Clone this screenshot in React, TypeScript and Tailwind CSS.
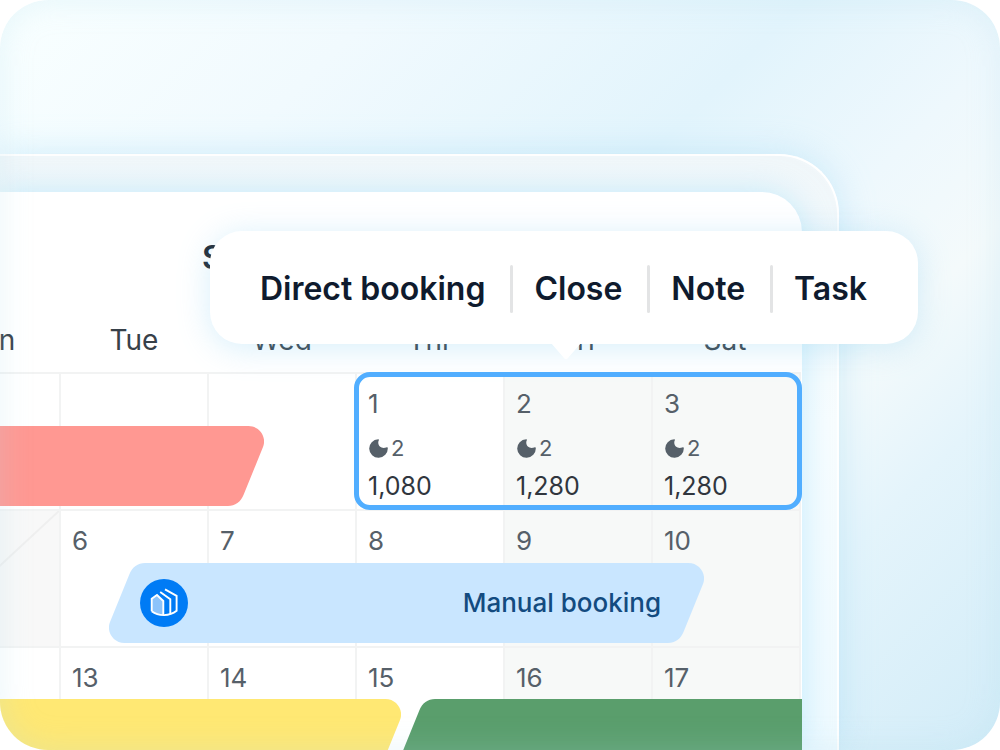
import React from "react";

type Day = { day?: number; nights?: number; price?: string; weekend?: boolean; blocked?: boolean };

const weekdays = ["Mon", "Tue", "Wed", "Thr", "Fri", "Sat"];

const weeks: Day[][] = [
  [
    {},
    {},
    {},
    { day: 1, nights: 2, price: "1,080" },
    { day: 2, nights: 2, price: "1,280", weekend: true },
    { day: 3, nights: 2, price: "1,280", weekend: true },
  ],
  [{ blocked: true }, { day: 6 }, { day: 7 }, { day: 8 }, { day: 9, weekend: true }, { day: 10, weekend: true }],
  [{}, { day: 13 }, { day: 14 }, { day: 15 }, { day: 16, weekend: true }, { day: 17, weekend: true }],
];

const actions = ["Direct booking", "Close", "Note", "Task"];

function Moon() {
  return (
    <svg viewBox="0 0 19 19" className="size-[19px] shrink-0" aria-hidden="true">
      <path
        d="M9.200.2A9.300 9.300 0 1 0 18.800 9.200C18.800 8.100 18 8 17.200 8.400C12.400 10.300 7.800 6.200 9.700 1.600C10.100.7 10.100.2 9.200.2Z"
        fill="#566069"
      />
    </svg>
  );
}

function Cap({ side }: { side: "left" | "right" }) {
  return (
    <svg
      viewBox="0 0 48 80"
      className={side === "left" ? "h-20 w-12 shrink-0 rotate-180" : "h-20 w-12 shrink-0"}
      fill="currentColor"
      aria-hidden="true"
    >
      <path d="M0 0H32.5C43.5 0 51 11 47 21L27.5 69C25 75.600 19 80 12 80H0Z" />
    </svg>
  );
}

function HouseLogo() {
  return (
    <svg viewBox="0 0 48 48" className="size-12 shrink-0" fill="none" aria-hidden="true">
      <circle cx="24" cy="24" r="24" fill="#007bf5" />
      <path d="M11.700 19.800L17.300 16.200L23.300 22V36C19 35.800 15 34.600 11.700 32.300Z" fill="#8cc3fb" />
      <g stroke="#fff" strokeWidth="1.900">
        <path d="M11.700 32.300V19.800L17 16L23.300 22V36" />
        <path d="M20.200 13L30.300 20.300V35" />
        <path d="M25 10.300L36.600 16.800V31.800C29.500 37.500 18.500 37.500 11.700 32.300" />
      </g>
    </svg>
  );
}

function Bar({ week }: { week: number }) {
  if (week === 0) {
    return (
      <div className="absolute left-0 top-[54px] z-10 flex w-[353px] text-[#ff9892]">
        <div className="flex-1 bg-current" />
        <Cap side="right" />
      </div>
    );
  }
  if (week === 1) {
    return (
      <div className="absolute left-[198px] top-[54px] z-10 flex w-[595px] text-[#c9e6ff]">
        <Cap side="left" />
        <div className="flex-1 bg-current" />
        <Cap side="right" />
        <div className="absolute inset-0 flex items-center justify-between pl-[31px] pr-[43px]">
          <HouseLogo />
          <span className="text-[26px] font-medium leading-8 text-[#134b80]">Manual booking</span>
        </div>
      </div>
    );
  }
  return (
    <>
      <div className="absolute left-0 top-[53px] z-10 flex w-[490px] text-[#ffe873]">
        <div className="flex-1 bg-current" />
        <Cap side="right" />
      </div>
      <div className="absolute -right-px left-[488px] top-[53px] z-10 flex text-[#5a9e6c]">
        <Cap side="left" />
        <div className="flex-1 bg-current" />
      </div>
    </>
  );
}

function Calendar() {
  return (
    <div className="flex justify-end pr-px">
      <table className="w-[890px] shrink-0 table-fixed border-separate border-spacing-0">
        <thead>
          <tr>
            {weekdays.map((name) => (
              <th
                key={name}
                scope="col"
                className="h-[52px] w-[148px] pb-3 pl-[2px] text-center text-[28px] font-normal leading-10 text-[#374049] last:w-[150px] last:pr-1"
              >
                {name}
              </th>
            ))}
          </tr>
        </thead>
        <tbody>
          {weeks.map((days, week) => (
            <tr key={week} className="relative">
              {days.map((d, i) => (
                <td
                  key={i}
                  className={
                    "h-[137px] border-l-2 border-t-2 border-[#f2f3f3] p-0 align-top last:border-r-2 " +
                    (d.weekend ? "bg-[#f7f9f8]" : d.blocked ? "bg-[#f8f8f8]" : "bg-white")
                  }
                >
                  {i === 0 && <Bar week={week} />}
                  {d.blocked && (
                    <svg viewBox="0 0 146 135" className="block h-[135px] w-full" aria-hidden="true">
                      <path d="M0 135L146 0" stroke="#efefef" strokeWidth="2" />
                    </svg>
                  )}
                  {d.day && (
                    <div className="pl-[11px] pt-[14px] text-[26px] leading-8 text-[#566069]">
                      {d.day}
                      {d.price && (
                        <>
                          <div className="mt-4 flex items-center gap-[3px] pl-px text-[22px] leading-6">
                            <Moon />
                            {d.nights}
                          </div>
                          <div className="mt-3 text-[25px] leading-7 text-[#30363e]">{d.price}</div>
                        </>
                      )}
                    </div>
                  )}
                  {d.day === 1 && (
                    <div className="absolute -right-px top-0 z-20 h-[138px] w-[448px] rounded-2xl border-[5px] border-[#51aeff]" />
                  )}
                </td>
              ))}
            </tr>
          ))}
        </tbody>
      </table>
    </div>
  );
}

function ActionMenu() {
  return (
    <div
      role="menu"
      className="absolute right-[82px] top-[231px] z-30 flex h-[113px] items-center rounded-[32px] bg-white pl-[50px] pr-[51px] pt-[2px] shadow-[0_4px_32px_rgba(130,205,242,0.32)]"
    >
      {actions.map((label, i) => (
        <React.Fragment key={label}>
          {i > 0 && <span className="ml-[25px] mr-[21px] h-12 w-[3px] rounded-full bg-[#e3e4e5]" />}
          <button type="button" role="menuitem" className="text-[32px] font-semibold leading-10 text-[#0f1b2e]">
            {label}
          </button>
        </React.Fragment>
      ))}
      <svg viewBox="0 0 32 18" className="absolute left-[340px] top-[112px] h-[18px] w-8" aria-hidden="true">
        <path d="M1 0H31L18 15Q16 17.500 14 15Z" fill="#fff" />
      </svg>
    </div>
  );
}

export default function App() {
  return (
    <main className="relative flex h-screen flex-col overflow-hidden rounded-[48px] bg-[linear-gradient(135deg,#f9ffff_0%,#f1fafe_22%,#e2f4fc_46%,#eef8fd_60%,#f4fafb_70%,#e4f4fb_80%,#d2ecf8_100%)] pt-[154px] font-['Inter',sans-serif]">
      <section className="mr-[161px] flex min-h-0 flex-1 flex-col rounded-tr-[60px] border-r-2 border-t-2 border-white bg-[linear-gradient(180deg,#f1f7fa_0%,#f8fdff_45%,#effaff_100%)] pr-[35px] pt-9 shadow-[0_0_36px_rgba(150,214,244,0.4)]">
        <div className="min-h-0 flex-1 overflow-hidden rounded-tr-[40px] bg-white pt-[46px] shadow-[0_0_32px_rgba(150,222,250,0.5)]">
          <h1 className="mb-[42px] pl-[202px] text-[32px] font-semibold leading-10 text-[#1d2733]">September</h1>
          <Calendar />
        </div>
      </section>
      <ActionMenu />
      <div className="pointer-events-none absolute inset-0 z-40 rounded-[48px] shadow-[inset_0_0_32px_rgba(175,222,235,0.26)]" />
    </main>
  );
}
